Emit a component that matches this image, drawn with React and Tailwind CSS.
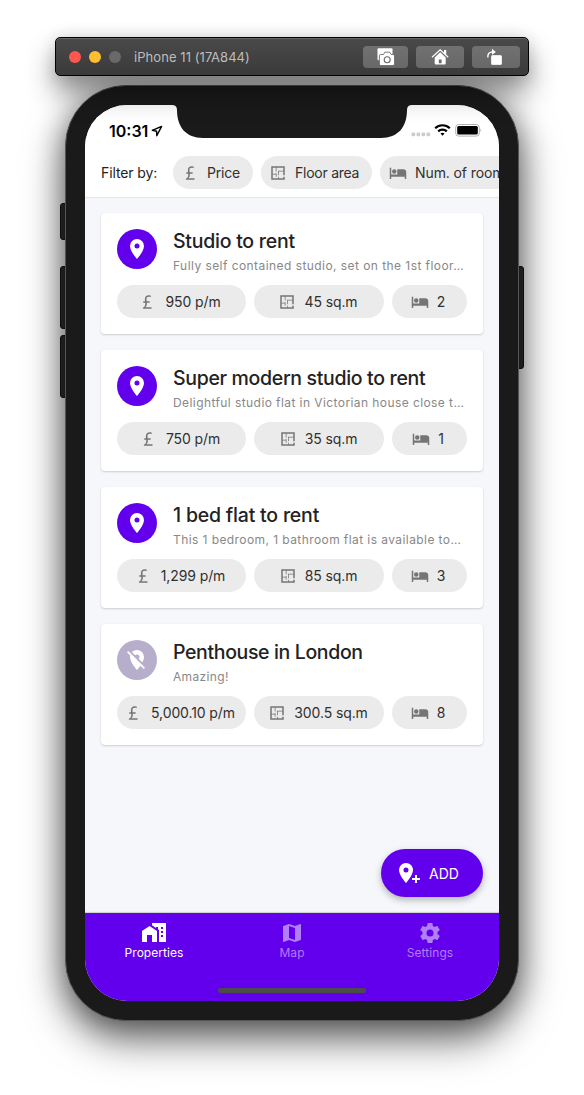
const P = {
  pin: "M12,11.5A2.5,2.5 0 0,1 9.5,9A2.5,2.5 0 0,1 12,6.5A2.5,2.5 0 0,1 14.5,9A2.5,2.5 0 0,1 12,11.5M12,2A7,7 0 0,0 5,9C5,14.25 12,22 12,22C12,22 19,14.25 19,9A7,7 0 0,0 12,2Z",
  pinOff: "M16.37,16.1L11.75,11.47L11.64,11.36L3.27,3L2,4.27L5.18,7.45C5.06,7.95 5,8.46 5,9C5,14.25 12,22 12,22C12,22 13.67,20.15 15.37,17.65L18.73,21L20,19.72M12,6.5A2.5,2.5 0 0,1 14.5,9C14.5,9.73 14.17,10.39 13.67,10.85L17.3,14.5C18.28,12.62 19,10.68 19,9A7,7 0 0,0 12,2C10,2 8.24,2.82 6.96,4.14L10.15,7.33C10.61,6.82 11.26,6.5 12,6.5Z",
  pinPlus: "M9,11.5A2.5,2.5 0 0,0 11.5,9A2.5,2.5 0 0,0 9,6.5A2.5,2.5 0 0,0 6.5,9A2.5,2.5 0 0,0 9,11.5M9,2C12.86,2 16,5.13 16,9C16,14.25 9,22 9,22C9,22 2,14.25 2,9A7,7 0 0,1 9,2M15,17H18V14H20V17H23V19H20V22H18V19H15V17Z",
  bed: "M19,7H11V14H3V5H1V20H3V17H21V20H23V11A4,4 0 0,0 19,7M7,13A3,3 0 0,0 10,10A3,3 0 0,0 7,7A3,3 0 0,0 4,10A3,3 0 0,0 7,13Z",
  pound: "M6.5,21V19.75C7.44,19.29 8.24,18.57 8.81,17.7C9.38,16.83 9.67,15.85 9.68,14.75L9.66,13.77L9.57,13H7V11H9.4C9.25,10.17 9.16,9.31 9.13,8.25C9.16,6.61 9.64,5.33 10.58,4.41C11.5,3.5 12.77,3 14.32,3C15.03,3 15.64,3.07 16.13,3.2C16.63,3.32 17,3.47 17.31,3.65L16.76,5.39C16.5,5.25 16.19,5.12 15.79,5C15.38,4.9 14.89,4.85 14.32,4.84C13.25,4.86 12.5,5.19 12,5.83C11.5,6.46 11.29,7.28 11.3,8.28L11.4,9.77L11.6,11H15.5V13H11.79C11.88,14 11.84,15 11.65,15.96C11.35,17.16 10.74,18.18 9.83,19H18V21H6.5Z",
  plan: "M10,5V10H9V5H5V13H9V12H10V17H9V14H5V19H12V17H13V19H19V17H21V21H3V3H21V15H19V10H13V15H12V9H19V5H10Z",
  map: "M15,19L9,16.89V5L15,7.11M20.5,3C20.44,3 20.39,3 20.34,3L15,5.1L9,3L3.36,4.9C3.15,4.97 3,5.15 3,5.38V20.5A0.5,0.5 0 0,0 3.5,21C3.55,21 3.61,21 3.66,20.97L9,18.9L15,21L20.64,19.1C20.85,19 21,18.85 21,18.62V3.5A0.5,0.5 0 0,0 20.5,3Z",
  cog: "M12,15.5A3.5,3.5 0 0,1 8.5,12A3.5,3.5 0 0,1 12,8.5A3.5,3.5 0 0,1 15.5,12A3.5,3.5 0 0,1 12,15.5M19.43,12.97C19.47,12.65 19.5,12.33 19.5,12C19.5,11.67 19.47,11.34 19.43,11L21.54,9.37C21.73,9.22 21.78,8.95 21.66,8.73L19.66,5.27C19.54,5.05 19.27,4.96 19.05,5.05L16.56,6.05C16.04,5.66 15.5,5.32 14.87,5.07L14.5,2.42C14.46,2.18 14.25,2 14,2H10C9.75,2 9.54,2.18 9.5,2.42L9.13,5.07C8.5,5.32 7.96,5.66 7.44,6.05L4.95,5.05C4.73,4.96 4.46,5.05 4.34,5.27L2.34,8.73C2.21,8.95 2.27,9.22 2.46,9.37L4.57,11C4.53,11.34 4.5,11.67 4.5,12C4.5,12.33 4.53,12.65 4.57,12.97L2.46,14.63C2.27,14.78 2.21,15.05 2.34,15.27L4.34,18.73C4.46,18.95 4.73,19.03 4.95,18.95L7.44,17.94C7.96,18.34 8.5,18.68 9.13,18.93L9.5,21.58C9.54,21.82 9.75,22 10,22H14C14.25,22 14.46,21.82 14.5,21.58L14.87,18.93C15.5,18.67 16.04,18.34 16.56,17.94L19.05,18.95C19.27,19.03 19.54,18.95 19.66,18.73L21.66,15.27C21.78,15.05 21.73,14.78 21.54,14.63L19.43,12.97Z",
  homes: "M0,21V10L7.5,5L15,10V21H10V14H5V21H0M24,2V21H17V8.93L16,8.27V6H14V6.93L10,4.27V2H24M21,14H19V16H21V14M21,10H19V12H21V10M21,6H19V8H21V6Z",
};

function Icon({ name, className }) {
  return (
    <svg viewBox="0 0 24 24" fill="currentColor" fillRule="evenodd" className={"shrink-0 " + className}>
      <path d={P[name]} />
    </svg>
  );
}

const cards = [
  { title: "Studio to rent", text: "Fully self contained studio, set on the 1st floor…", price: "950 p/m", area: "45 sq.m", rooms: "2", pin: "pin", titleCls: "tracking-[-0.25px]", textCls: "tracking-[0.44px]" },
  { title: "Super modern studio to rent", text: "Delightful studio flat in Victorian house close t…", price: "750 p/m", area: "35 sq.m", rooms: "1", pin: "pin", titleCls: "tracking-[-0.33px]", textCls: "tracking-[0.42px]" },
  { title: "1 bed flat to rent", text: "This 1 bedroom, 1 bathroom flat is available to…", price: "1,299 p/m", area: "85 sq.m", rooms: "3", pin: "pin", titleCls: "tracking-[-0.2px]", textCls: "tracking-[0.42px]" },
  { title: "Penthouse in London", text: "Amazing!", price: "5,000.10 p/m", area: "300.5 sq.m", rooms: "8", pin: "pinOff", titleCls: "tracking-[-0.36px]", textCls: "tracking-[0.34px]" },
];

function Chip({ icon, children, className }) {
  return (
    <div className={"flex h-[33px] shrink-0 items-center rounded-full bg-[#ebebeb] text-[14px] whitespace-nowrap text-[#303030] " + className}>
      <Icon name={icon} className="h-[18px] w-[18px] text-[#757575]" />
      <span>{children}</span>
    </div>
  );
}

function Card({ c }) {
  return (
    <div className="h-[121px] rounded-[4px] bg-white px-4 pt-4 shadow-[0_1px_2px_rgba(0,0,0,0.17),0_0_1px_rgba(0,0,0,0.06)]">
      <div className="flex h-[56px] gap-4">
        <div className={"flex h-10 w-10 shrink-0 items-center justify-center rounded-full text-white " + (c.pin === "pin" ? "bg-[#6200ee]" : "bg-[#b7aecb]")}>
          <Icon name={c.pin} className="h-6 w-6" />
        </div>
        <div className="min-w-0 flex-1 whitespace-nowrap">
          <div className={"text-[19.5px] leading-[24px] font-medium text-[#222] " + c.titleCls}>{c.title}</div>
          <div className={"mt-[4px] text-[12px] leading-[18px] text-[#888] " + c.textCls}>{c.text}</div>
        </div>
      </div>
      <div className="flex gap-2">
        <Chip icon="pound" className="w-[129px] justify-center gap-[9px] pr-1 tracking-[-0.1px]">{c.price}</Chip>
        <Chip icon="plan" className="w-[130px] justify-center gap-2 pr-[2px] tracking-[-0.1px]">{c.area}</Chip>
        <Chip icon="bed" className="w-[75px] justify-center gap-2 pr-[3px]">{c.rooms}</Chip>
      </div>
    </div>
  );
}

function Toolbar() {
  return (
    <div className="relative z-10 mx-auto flex h-[39px] w-[474px] items-center rounded-[5px] border border-black bg-linear-to-b from-[#4a4a4a] to-[#3a3a3a] pl-[13px] shadow-[inset_0_1px_0_#686868,0_16px_28px_rgba(0,0,0,0.45),0_0_16px_rgba(0,0,0,0.12)]">
      <div className="flex gap-2">
        <i className="h-3 w-3 rounded-full bg-[#ff5650]" />
        <i className="h-3 w-3 rounded-full bg-[#fdbe2f]" />
        <i className="h-3 w-3 rounded-full bg-[#696969]" />
      </div>
      <span className="ml-[13px] pt-[2px] text-[13px] tracking-[0.07px] text-[#bdbdbd]">iPhone 11 (17A844)</span>
      <div className="ml-auto flex gap-2 pr-2 text-white">
        <div className="flex h-[22px] w-[45px] items-center justify-center rounded-[4px] bg-linear-to-b from-[#717171] to-[#686868]">
          <svg viewBox="0 0 18 18" className="h-[18px] w-[18px]">
            <rect x="0.500" y="0.300" width="15" height="12" rx="1" fill="white" />
            <path d="M3.800 6.500h2.700l1.300-2.300h5l1.300 2.300h2q1.400 0 1.400 1.400v8.200q0 1.400-1.400 1.400H3.800q-1.400 0-1.400-1.400V7.900q0-1.400 1.400-1.400z" fill="white" stroke="#6d6d6d" strokeWidth="0.900" />
            <circle cx="10.200" cy="11.700" r="3" fill="none" stroke="#6b6b6b" strokeWidth="1.100" />
          </svg>
        </div>
        <div className="flex h-[22px] w-[48px] items-center justify-center rounded-[4px] bg-linear-to-b from-[#717171] to-[#686868]">
          <svg viewBox="0 0 18 18" className="h-[18px] w-[18px]">
            <path d="M1 9.300L9.200 1.700l8 7.600" fill="none" stroke="white" strokeWidth="1.200" />
            <path d="M13 2h2.200v5.200L13 5z" fill="white" />
            <path fillRule="evenodd" d="M9.200 4.300l5.500 5.200V15.500q0 1-1 1H4.700q-1 0-1-1V9.500zM7.800 11.500v3.800h2.800v-3.800z" fill="white" />
          </svg>
        </div>
        <div className="flex h-[22px] w-[48px] items-center justify-center rounded-[4px] bg-linear-to-b from-[#717171] to-[#686868]">
          <svg viewBox="0 0 18 18" className="h-[18px] w-[18px]">
            <path d="M0.900 9.500Q0.400 4 5.500 4" fill="none" stroke="white" strokeWidth="1.400" />
            <path d="M5 0.800L8.800 4 5 7z" fill="white" />
            <rect x="4" y="7" width="11" height="10" rx="1.500" fill="white" stroke="#6d6d6d" strokeWidth="0.300" />
          </svg>
        </div>
      </div>
    </div>
  );
}

function Tab({ icon, label, active }) {
  return (
    <div className={"flex flex-1 flex-col items-center pt-[8px] " + (active ? "text-white" : "text-[#b17ff6]")}>
      <Icon name={icon} className="h-6 w-6" />
      <span className="text-[12px] leading-[15px] tracking-[0.05px]">{label}</span>
    </div>
  );
}

export default function App() {
  return (
    <div className="h-[1095px] w-[584px] overflow-hidden bg-white pt-[37px] font-['Inter','Liberation_Sans',sans-serif]">
      <Toolbar />
      <div className="relative mx-auto mt-[9px] h-[936px] w-[454px]">
        <i className="absolute top-[118px] -left-[5px] h-[37px] w-[8px] rounded-[3px] border border-[#151515] bg-[#303030]" />
        <i className="absolute top-[181px] -left-[5px] h-[63px] w-[8px] rounded-[3px] border border-[#151515] bg-[#303030]" />
        <i className="absolute top-[250px] -left-[5px] h-[63px] w-[8px] rounded-[3px] border border-[#151515] bg-[#303030]" />
        <i className="absolute top-[181px] -right-[5px] h-[103px] w-[8px] rounded-[3px] border border-[#151515] bg-[#303030]" />
        <div className="relative h-full rounded-[61px] border border-[#555] bg-[#1a1a1a] p-[19px] shadow-[0_18px_40px_rgba(0,0,0,0.6),0_2px_28px_rgba(0,0,0,0.3)]">
          <div className="relative flex h-full flex-col overflow-hidden rounded-[42px] bg-[#f6f7fa]">
            <div className="h-[93px] shrink-0 border-b border-[#e6e6e8] bg-white">
              <div className="flex h-[51px] items-center justify-between pr-[17px] pl-6">
                <div className="flex items-center gap-[3px] text-[16px] font-semibold text-black">
                  <span>10:31</span>
                  <svg viewBox="0 0 12 12" className="h-3 w-3"><path d="M10.600 1.400L1.300 5.300l4.300.900.200 4.500z" fill="none" stroke="black" strokeWidth="1.400" strokeLinejoin="round" /></svg>
                </div>
                <svg viewBox="0 0 71 14" className="-mt-[2px] h-[14px] w-[71px]">
                  <g fill="#ccc"><rect x="0.500" y="9.500" width="3.700" height="3.700" rx="1.200" /><rect x="5.500" y="9.500" width="3.700" height="3.700" rx="1.200" /><rect x="10.500" y="9.500" width="3.700" height="3.700" rx="1.200" /><rect x="15.500" y="9.500" width="3.700" height="3.700" rx="1.200" /></g>
                  <g fill="none" stroke="black" strokeWidth="2.200"><path d="M24.200 5.200a10.500 10.500 0 0 1 14.600 0" /><path d="M27.200 8.400a6.200 6.200 0 0 1 8.600 0" /></g>
                  <path d="M31.500 12.700l-2-2.100a3 3 0 0 1 4 0z" />
                  <rect x="44.700" y="1.500" width="23.600" height="11.600" rx="3" fill="none" stroke="#b0b0b0" />
                  <rect x="46.200" y="3" width="20.600" height="8.600" rx="1.500" />
                  <path d="M69.500 5.500q1.500 1.700 0 3.500z" fill="#999" />
                </svg>
              </div>
              <div className="flex items-center gap-2 pl-4">
                <span className="w-[64px] shrink-0 text-[14px] tracking-[-0.1px] whitespace-nowrap text-[#222]">Filter by:</span>
                <Chip icon="pound" className="w-[80px] gap-2 pl-2 tracking-[-0.2px]">Price</Chip>
                <Chip icon="plan" className="w-[111px] gap-2 pl-2 tracking-[-0.25px]">Floor area</Chip>
                <Chip icon="bed" className="w-[142px] gap-2 pl-[9px] tracking-[-0.1px]">Num. of rooms</Chip>
              </div>
            </div>
            <svg viewBox="0 0 240 34" className="absolute top-0 left-[87px] h-[34px] w-[240px]">
              <path d="M0 0Q5 0 5 5C5 22 14 33 31 33H209C226 33 235 22 235 5Q235 0 240 0z" fill="#1a1a1a" />
            </svg>
            <div className="flex flex-1 flex-col gap-4 px-4 pt-[15px]">
              {cards.map((c) => <Card key={c.title} c={c} />)}
            </div>
            <button className="absolute right-4 bottom-[104px] flex h-12 w-[102px] items-center gap-2 rounded-full bg-[#6200ee] pl-4 text-[14px] text-white shadow-[0_3px_7px_rgba(0,0,0,0.28)]">
              <Icon name="pinPlus" className="h-6 w-6" />ADD
            </button>
            <div className="relative flex h-[88px] shrink-0 bg-[#6200ee] shadow-[0_-1px_1px_rgba(0,0,0,0.15)]">
              <Tab icon="homes" label="Properties" active />
              <Tab icon="map" label="Map" />
              <Tab icon="cog" label="Settings" />
              <i className="absolute bottom-[8px] left-[133px] h-[5px] w-[148px] rounded-full bg-[#4b4b4b]" />
            </div>
          </div>
        </div>
      </div>
    </div>
  );
}
